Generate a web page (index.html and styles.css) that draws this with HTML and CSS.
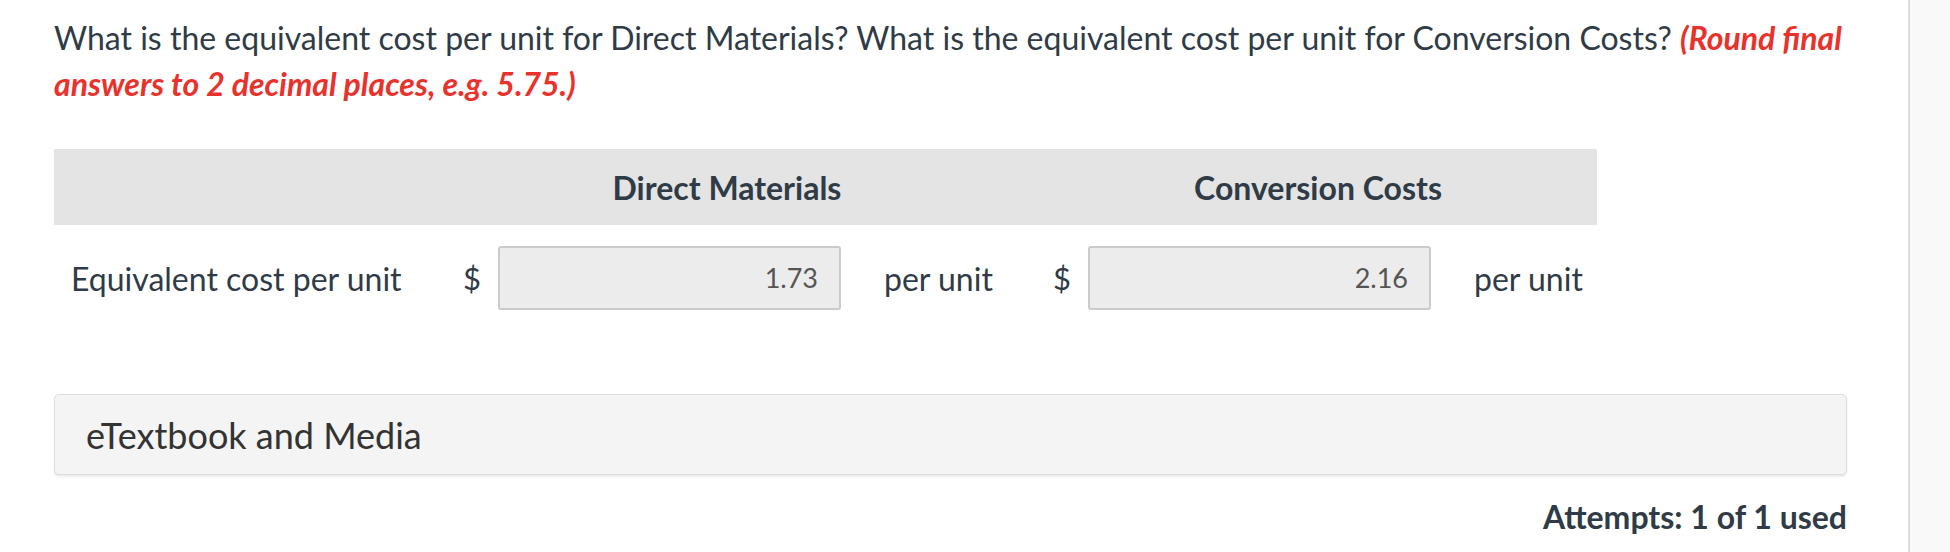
FILE: index.html
```html
<!DOCTYPE html>
<html lang="en">
<head>
<meta charset="utf-8">
<title>Question</title>
<link rel="stylesheet" href="styles.css">
</head>
<body>
<div class="layout">
  <main class="content">
    <p class="question">What is the equivalent cost per unit for Direct Materials? What is the equivalent cost per unit for Conversion Costs? <em class="hint">(Round final</em> <em class="hint">answers to 2 decimal places, e.g. 5.75.)</em></p>

    <div class="table">
      <div class="thead">
        <div class="th th-label"></div>
        <div class="th th-dm">Direct Materials</div>
        <div class="th th-cc">Conversion Costs</div>
      </div>
      <div class="trow">
        <div class="td-label">Equivalent cost per unit</div>
        <div class="group group-dm">
          <span class="cur">$</span>
          <div class="field">1.73</div>
          <span class="unit">per unit</span>
        </div>
        <div class="group group-cc">
          <span class="cur">$</span>
          <div class="field">2.16</div>
          <span class="unit">per unit</span>
        </div>
      </div>
    </div>

    <div class="media">eTextbook and Media</div>
    <div class="attempts">Attempts: 1 of 1 used</div>
  </main>
  <aside class="side"></aside>
</div>
</body>
</html>
```
FILE: styles.css
```css
html, body {
  margin: 0;
  padding: 0;
  background: #ffffff;
}
body {
  font-family: "Lato", "Liberation Sans", sans-serif;
  color: #2f3b46;
}
.layout {
  display: flex;
  height: 552px;
  overflow: hidden;
}
.content {
  width: 1910px;
  box-sizing: border-box;
  padding: 0 61px 0 54px;
  border-right: 2px solid #dcdcdc;
}
.side {
  flex: 1;
  background: #f9f9f9;
}
.question {
  margin: 0;
  padding-top: 15px;
  font-size: 32px;
  line-height: 46px;
}
.hint {
  color: #e8322b;
  font-weight: bold;
  font-style: italic;
}
.table {
  width: 1543px;
  margin-top: 42px;
}
.thead {
  display: flex;
  height: 76px;
  background: #e4e4e4;
  align-items: center;
}
.th {
  font-weight: bold;
  font-size: 32px;
  text-align: center;
}
.th-label { width: 361px; }
.th-dm { width: 624px; }
.th-cc { flex: 1; }
.trow {
  display: flex;
  align-items: center;
  height: 86px;
  padding-top: 20px;
  box-sizing: border-box;
  font-size: 32px;
}
.td-label {
  width: 409px;
  padding-left: 17px;
  box-sizing: border-box;
}
.group {
  display: flex;
  align-items: center;
}
.group-dm { width: 590px; }
.cur {
  width: 35px;
  font-size: 31px;
}
.field {
  width: 343px;
  height: 64px;
  box-sizing: border-box;
  background: #ececec;
  border: 2px solid #cbcbcb;
  border-radius: 3px;
  text-align: right;
  padding-right: 21px;
  line-height: 60px;
  font-size: 27px;
  color: #555555;
}
.unit {
  padding-left: 43px;
}
.media {
  margin-top: 83px;
  height: 81px;
  box-sizing: border-box;
  background: #f4f4f4;
  border: 1px solid #dddddd;
  border-radius: 5px;
  box-shadow: 0 2px 2px rgba(0, 0, 0, 0.08);
  padding-left: 31px;
  display: flex;
  align-items: center;
  font-size: 36px;
  color: #333333;
}
.attempts {
  margin-top: 22px;
  text-align: right;
  font-weight: bold;
  font-size: 32px;
}
```
